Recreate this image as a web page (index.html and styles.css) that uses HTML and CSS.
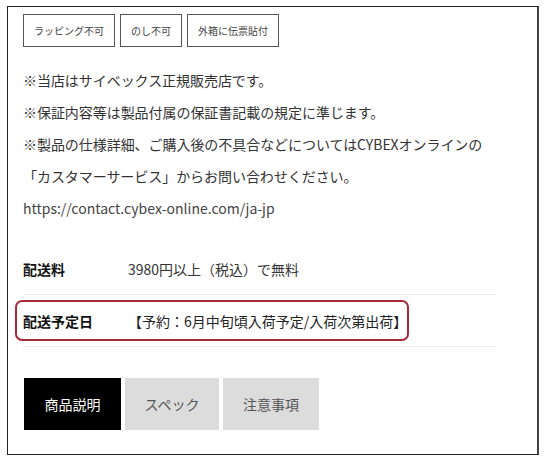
FILE: index.html
```html
<!DOCTYPE html>
<html lang="ja">
<head>
<meta charset="utf-8">
<link rel="stylesheet" href="styles.css">
</head>
<body>
<div class="frame">
  <div class="tags">
    <span class="tag">ラッピング不可</span>
    <span class="tag">のし不可</span>
    <span class="tag">外箱に伝票貼付</span>
  </div>
  <div class="notes">
    <p>※当店はサイベックス正規販売店です。</p>
    <p>※保証内容等は製品付属の保証書記載の規定に準じます。</p>
    <p>※製品の仕様詳細、ご購入後の不具合などについてはCYBEXオンラインの</p>
    <p>「カスタマーサービス」からお問い合わせください。</p>
    <p class="url">https://contact.cybex-online.com/ja-jp</p>
  </div>
  <div class="info">
    <div class="row">
      <div class="label">配送料</div>
      <div class="value">3980円以上（税込）で無料</div>
    </div>
    <div class="row highlighted">
      <div class="label">配送予定日</div>
      <div class="value">【予約：6月中旬頃入荷予定/入荷次第出荷】</div>
      <div class="mark"></div>
    </div>
  </div>
  <div class="tabs">
    <div class="tab active">商品説明</div>
    <div class="tab">スペック</div>
    <div class="tab">注意事項</div>
  </div>
</div>
</body>
</html>
```
FILE: styles.css
```css
html, body {
  margin: 0;
  padding: 0;
  background: #fff;
}
body {
  font-family: "Noto Sans CJK JP", "Noto Sans", sans-serif;
  color: #333;
}
.frame {
  margin: 6px 0 0 7px;
  width: 532px;
  height: 449px;
  border: 1px solid #222;
  border-right: 2px solid #444;
  box-sizing: border-box;
  padding: 7px 0 0 15px;
}
.tags {
  display: flex;
  gap: 5px;
  height: 33px;
}
.tag {
  display: flex;
  align-items: center;
  border: 1px solid #555;
  padding: 0 10px;
  font-size: 10px;
  color: #444;
  height: 33px;
  box-sizing: border-box;
  white-space: nowrap;
}
.notes {
  margin-top: 17px;
}
.notes p {
  margin: 0;
  font-size: 14px;
  line-height: 32px;
  height: 32px;
  white-space: nowrap;
  letter-spacing: -0.05px;
}
.notes .url {
  color: #444;
  letter-spacing: 0;
}
.info {
  margin-top: 19px;
  width: 473px;
}
.row {
  position: relative;
  display: flex;
  align-items: center;
  height: 51px;
  border-bottom: 1px solid #ececec;
  font-size: 14px;
}
.label {
  width: 105px;
  font-weight: bold;
  color: #111;
  flex: none;
}
.value {
  color: #333;
}
.highlighted .value {
  color: #222;
}
.mark {
  position: absolute;
  left: -8px;
  top: 5px;
  width: 394px;
  height: 41px;
  border: 2px solid #a52a36;
  border-radius: 7px;
  box-sizing: border-box;
}
.tabs {
  display: flex;
  gap: 4px;
  margin: 31px 0 0 1px;
}
.tab {
  width: 97px;
  height: 52px;
  display: flex;
  align-items: center;
  justify-content: center;
  background: #dcdcdc;
  color: #555;
  font-size: 14px;
}
.tab.active {
  background: #000;
  color: #fff;
}
.tab:nth-child(2) { width: 94px; }
.tab:nth-child(3) { width: 96px; }
```
